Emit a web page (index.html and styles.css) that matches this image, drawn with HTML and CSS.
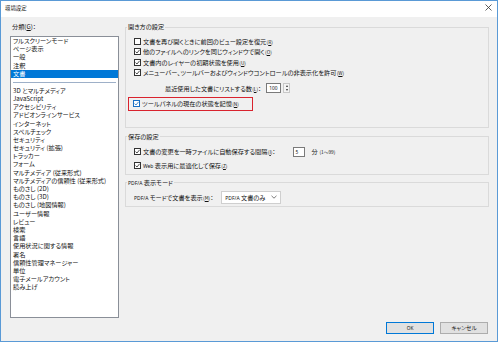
FILE: index.html
```html
<!DOCTYPE html>
<html lang="ja">
<head>
<meta charset="utf-8">
<title>環境設定</title>
<link rel="stylesheet" href="styles.css">
</head>
<body>
<div class="window">
  <div class="titlebar">
    <span class="title">環境設定</span>
    <svg class="close" width="7" height="7" viewBox="0 0 7 7"><path d="M0.5 0.5L6.5 6.5M6.5 0.5L0.5 6.5" stroke="#333" stroke-width="0.8" fill="none"/></svg>
  </div>
  <div class="body">
    <div class="main">
      <div class="left">
        <div class="cat-label">分類(<u>G</u>)：</div>
        <div class="listbox">
          <div class="item">フルスクリーンモード</div>
          <div class="item">ページ表示</div>
          <div class="item">一般</div>
          <div class="item">注釈</div>
          <div class="item sel">文書</div>
          <div class="sep"></div>
          <div class="item">3D とマルチメディア</div>
          <div class="item">JavaScript</div>
          <div class="item">アクセシビリティ</div>
          <div class="item">アドビオンラインサービス</div>
          <div class="item">インターネット</div>
          <div class="item">スペルチェック</div>
          <div class="item">セキュリティ</div>
          <div class="item">セキュリティ (拡張)</div>
          <div class="item">トラッカー</div>
          <div class="item">フォーム</div>
          <div class="item">マルチメディア (従来形式)</div>
          <div class="item">マルチメディアの信頼性 (従来形式)</div>
          <div class="item">ものさし (2D)</div>
          <div class="item">ものさし (3D)</div>
          <div class="item">ものさし (地図情報)</div>
          <div class="item">ユーザー情報</div>
          <div class="item">レビュー</div>
          <div class="item">検索</div>
          <div class="item">言語</div>
          <div class="item">使用状況に関する情報</div>
          <div class="item">署名</div>
          <div class="item">信頼性管理マネージャー</div>
          <div class="item">単位</div>
          <div class="item">電子メールアカウント</div>
          <div class="item">読み上げ</div>
        </div>
      </div>
      <div class="right">
        <fieldset class="group g1">
          <legend>開き方の設定</legend>
          <div class="cbrow"><span class="cb"></span><span>文書を再び開くときに前回のビュー設定を復元<span class="mn">(<u>R</u>)</span></span></div>
          <div class="cbrow"><span class="cb on"><svg width="5" height="5" viewBox="0 0 5 5"><path d="M0.5 2.6L2 4L4.6 0.8" stroke="#222" stroke-width="0.8" fill="none"/></svg></span><span>他のファイルへのリンクを同じウィンドウで開く<span class="mn">(<u>O</u>)</span></span></div>
          <div class="cbrow"><span class="cb on"><svg width="5" height="5" viewBox="0 0 5 5"><path d="M0.5 2.6L2 4L4.6 0.8" stroke="#222" stroke-width="0.8" fill="none"/></svg></span><span>文書内のレイヤーの初期状態を使用<span class="mn">(<u>U</u>)</span></span></div>
          <div class="cbrow"><span class="cb on"><svg width="5" height="5" viewBox="0 0 5 5"><path d="M0.5 2.6L2 4L4.6 0.8" stroke="#222" stroke-width="0.8" fill="none"/></svg></span><span>メニューバー、ツールバーおよびウィンドウコントロールの非表示化を許可<span class="mn">(<u>W</u>)</span></span></div>
          <div class="spinrow">
            <span>最近使用した文書にリストする数<span class="mn">(<u>L</u>)</span>：</span>
            <span class="textbox spin-input">100</span>
            <span class="spinner"><span class="up"></span><span class="down"></span></span>
          </div>
          <div class="hl">
            <span class="cb on focus"><svg width="5" height="5" viewBox="0 0 5 5"><path d="M0.5 2.6L2 4L4.6 0.8" stroke="#1a6fc4" stroke-width="0.8" fill="none"/></svg></span><span>ツールパネルの現在の状態を記憶<span class="mn">(<u>N</u>)</span></span>
          </div>
        </fieldset>
        <fieldset class="group g2">
          <legend>保存の設定</legend>
          <div class="cbrow r1"><span class="cb on"><svg width="5" height="5" viewBox="0 0 5 5"><path d="M0.5 2.6L2 4L4.6 0.8" stroke="#222" stroke-width="0.8" fill="none"/></svg></span><span>文書の変更を一時ファイルに自動保存する間隔<span class="mn">(<u>I</u>)</span>：</span><span class="textbox min-input">5</span><span class="unit">分 <span class="mn">(1〜99)</span></span></div>
          <div class="cbrow"><span class="cb on"><svg width="5" height="5" viewBox="0 0 5 5"><path d="M0.5 2.6L2 4L4.6 0.8" stroke="#222" stroke-width="0.8" fill="none"/></svg></span><span><span class="lat">Web</span> 表示用に最適化して保存<span class="mn">(<u>Z</u>)</span></span></div>
        </fieldset>
        <fieldset class="group g3">
          <legend><span class="lat">PDF/A</span> 表示モード</legend>
          <div class="selrow">
            <span><span class="lat">PDF/A</span> モードで文書を表示<span class="mn">(<u>M</u>)</span>：</span>
            <span class="select"><span><span class="lat">PDF/A</span> 文書のみ</span><svg width="6" height="4" viewBox="0 0 6 4"><path d="M0.5 0.8L3 3.2L5.5 0.8" stroke="#444" stroke-width="0.7" fill="none"/></svg></span>
          </div>
        </fieldset>
      </div>
    </div>
    <div class="footer">
      <span class="btn ok">OK</span>
      <span class="btn">キャンセル</span>
    </div>
  </div>
</div>
</body>
</html>
```

FILE: styles.css
```css
* { box-sizing: border-box; }
html, body { margin: 0; padding: 0; background: #ffffff; }
body {
  font-family: "Noto Sans CJK JP", "Noto Sans", sans-serif;
  font-size: 6.2px;
  font-feature-settings: "palt";
  color: #111111;
}
.window {
  width: 498px;
  height: 342px;
  border: 1px solid #5a9ad6;
  background: #f0f0f0;
  display: flex;
  flex-direction: column;
}
.titlebar {
  height: 16px;
  background: #ffffff;
  display: flex;
  align-items: center;
  justify-content: space-between;
  padding: 0 5px 2px 4px;
  flex: none;
}
.title { font-size: 5.4px; line-height: 8px; font-feature-settings: normal; }
.close { display: block; margin-top: -1px; }
.body {
  flex: 1;
  display: flex;
  flex-direction: column;
  padding: 6px 8px 7px 9px;
}
.main { display: flex; gap: 6px; height: 295px; }
.left { width: 109px; display: flex; flex-direction: column; }
.cat-label { height: 8px; line-height: 8px; padding-left: 2px; margin-bottom: 5px; }
.cat-label u, .mn u { text-decoration: underline; }
.listbox {
  flex: 1;
  background: #ffffff;
  border: 1px solid #8a8f98;
  padding-top: 0;
}
.item {
  height: 8.2px;
  line-height: 8.2px;
  padding-left: 2px;
  white-space: nowrap;
}
.item.sel { background: #0078d7; color: #ffffff; height: 8px; line-height: 8px; }
.sep { height: 9px; margin: 0 2px; display: flex; align-items: center; }
.sep::before { content: ""; display: block; height: 1px; width: 100%; background: #9eb0c8; }
.right { flex: 1; display: flex; flex-direction: column; }
.group {
  margin: 0;
  border: 1px solid #dadada;
  padding: 0 1px;
  min-width: 0;
}
.group legend {
  padding: 0 1px;
  line-height: 8px;
  height: 8px;
  margin-left: 0;
}
.g1 { padding-top: 5px; padding-bottom: 16px; }
.g2 { margin-top: 5px; padding-top: 5px; padding-bottom: 3px; }
.g3 { margin-top: 4px; padding-top: 4px; padding-bottom: 2px; }
.cbrow {
  display: flex;
  align-items: center;
  height: 10.5px;
  padding-left: 7px;
  white-space: nowrap;
}
.cb {
  width: 7px;
  height: 7px;
  border: 1px solid #333333;
  background: #ffffff;
  margin-right: 2px;
  flex: none;
  display: flex;
  align-items: center;
  justify-content: center;
}
.cb svg { display: block; }
.cb.focus { border-color: #1a6fc4; }
.mn { font-size: 4.8px; margin-left: 0.3px; }
.lat { font-family: "Noto Sans", sans-serif; font-size: 5px; }
.spinrow {
  display: flex;
  align-items: center;
  height: 12px;
  margin-top: 4px;
  padding-left: 38px;
  white-space: nowrap;
}
.textbox {
  background: #ffffff;
  border: 1px solid #7a7a7a;
  height: 10px;
  line-height: 8px;
  display: inline-block;
  font-family: "Noto Sans", sans-serif;
  font-size: 4.8px;
  padding-left: 2px;
}
.spin-input { width: 15px; margin-left: 5px; }
.spinner {
  width: 7px;
  height: 10px;
  margin-left: 2px;
  display: flex;
  flex-direction: column;
  background: #f4f4f4;
  border: 1px solid #c8c8c8;
}
.spinner span { flex: 1; display: flex; align-items: center; justify-content: center; }
.spinner .up::before {
  content: ""; border-left: 1.5px solid transparent; border-right: 1.5px solid transparent; border-bottom: 2px solid #333;
}
.spinner .down::before {
  content: ""; border-left: 1.5px solid transparent; border-right: 1.5px solid transparent; border-top: 2px solid #333;
}
.hl {
  display: flex;
  align-items: center;
  width: 125px;
  height: 14px;
  margin-top: 2.5px;
  margin-left: 1px;
  padding-left: 4px;
  border: 1px solid #d9232e;
  white-space: nowrap;
}
.r1 { height: 11px; margin-top: 0.5px; }
.g2 .cbrow + .cbrow { margin-top: 3px; }
.min-input { width: 12px; margin-left: 17px; }
.unit { margin-left: 7px; }
.selrow {
  display: flex;
  align-items: center;
  height: 13px;
  padding-left: 7px;
  white-space: nowrap;
}
.select {
  margin-left: 8px;
  width: 60px;
  height: 13px;
  background: #ffffff;
  border: 1px solid #cfcfcf;
  display: flex;
  align-items: center;
  justify-content: space-between;
  padding: 0 3px 0 3px;
}
.footer {
  margin-top: auto;
  display: flex;
  justify-content: flex-end;
  gap: 6px;
  padding-right: 1px;
}
.btn {
  width: 48px;
  height: 12px;
  border: 1px solid #adadad;
  background: #e1e1e1;
  display: flex;
  align-items: center;
  justify-content: center;
  font-size: 5.6px;
}
.btn.ok { border-color: #0078d7; font-family: "Noto Sans", sans-serif; font-size: 4.8px; }
```
